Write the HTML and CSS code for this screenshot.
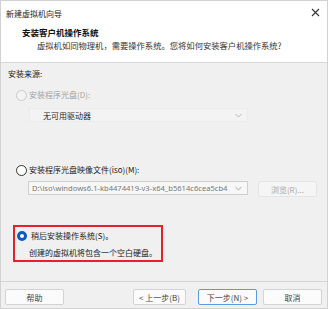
FILE: index.html
```html
<!DOCTYPE html>
<html lang="zh-CN">
<head>
<meta charset="utf-8">
<link rel="stylesheet" href="styles.css">
</head>
<body>
<div class="window">
  <div class="top">
    <div class="titlebar">
      <span class="title">新建虚拟机向导</span>
      <svg class="close" width="9" height="9" viewBox="0 0 9 9"><path d="M1 1L8 8M8 1L1 8" stroke="#333" stroke-width="1.1"/></svg>
    </div>
    <div class="header">
      <div class="h-title">安装客户机操作系统</div>
      <div class="h-sub">虚拟机如同物理机，需要操作系统。您将如何安装客户机操作系统?</div>
    </div>
  </div>
  <div class="body">
    <div class="section-label">安装来源:</div>
    <div class="radio-row disabled row-cd"><span class="radio"></span><span>安装程序光盘(D):</span></div>
    <div class="select disabled-select"><span>无可用驱动器</span><svg class="chev" width="7" height="5" viewBox="0 0 7 5"><path d="M0.5 1L3.5 4L6.5 1" fill="none" stroke="#b5b5b5" stroke-width="1"/></svg></div>
    <div class="radio-row row-iso"><span class="radio"></span><span>安装程序光盘映像文件(iso)(M):</span></div>
    <div class="iso-line">
      <div class="select iso-select"><span class="path">D:\iso\windows6.1-kb4474419-v3-x64_b5614c6cea5cb4</span><svg class="chev" width="7" height="5" viewBox="0 0 7 5"><path d="M0.5 1L3.5 4L6.5 1" fill="none" stroke="#a8a8a8" stroke-width="1"/></svg></div>
      <div class="btn browse">浏览(R)...</div>
    </div>
    <div class="later-box">
      <div class="radio-row row-later"><span class="radio checked"></span><span>稍后安装操作系统(S)。</span></div>
      <div class="later-desc">创建的虚拟机将包含一个空白硬盘。</div>
    </div>
  </div>
  <div class="footer">
    <div class="btn help">帮助</div>
    <div class="spacer"></div>
    <div class="btn prev">&lt; 上一步(B)</div>
    <div class="btn next">下一步(N) &gt;</div>
    <div class="btn cancel">取消</div>
  </div>
</div>
</body>
</html>
```
FILE: styles.css
```css
* { box-sizing: border-box; }
html, body { margin: 0; padding: 0; }
body {
  width: 328px;
  height: 309px;
  font-family: "Noto Sans CJK SC", "Noto Sans", sans-serif;
  font-size: 8px;
  color: #1b1b1b;
  background: #f0f0f0;
  overflow: hidden;
}
.window {
  width: 328px;
  height: 309px;
  display: flex;
  flex-direction: column;
  border: 1px solid #d2d2d2;
  background: #f0f0f0;
}
.top {
  background: #ffffff;
  border-bottom: 1px solid #d8d8d8;
  height: 62px;
  flex: none;
}
.titlebar {
  height: 25px;
  display: flex;
  align-items: center;
  justify-content: space-between;
  padding: 0 7px 0 5px;
}
.title { font-size: 8px; color: #222; }
.close { margin-top: -3px; }
.header { padding-left: 21px; }
.h-title {
  font-weight: bold;
  font-size: 8.5px;
  line-height: 12px;
  color: #111;
}
.h-sub {
  margin-top: 1px;
  padding-left: 15px;
  line-height: 12px;
  font-size: 8.3px;
  color: #333;
  white-space: nowrap;
}
.body {
  flex: 1;
  padding-top: 5px;
  padding-left: 7px;
}
.section-label { line-height: 12px; }
.radio-row {
  display: flex;
  align-items: center;
  line-height: 12px;
  height: 12px;
  padding-left: 8px;
  white-space: nowrap;
}
.radio {
  width: 11px;
  height: 11px;
  border-radius: 50%;
  border: 1px solid #333;
  background: #fff;
  margin-right: 2px;
  flex: none;
}
.disabled { color: #a3a3a3; }
.disabled .radio { border-color: #c9c9c9; background: #f4f4f4; }
.row-cd { margin-top: 9px; }
.select {
  display: flex;
  align-items: center;
  justify-content: space-between;
  height: 14px;
  padding: 0 5px 0 13px;
}
.disabled-select {
  margin-left: 21px;
  margin-top: 7px;
  width: 219px;
  background: #f3f3f3;
  border: 1px solid #ebebeb;
  color: #2a2a2a;
}
.row-iso { margin-top: 42px; }
.iso-line {
  display: flex;
  align-items: flex-start;
  height: 16px;
  margin-top: 5px;
  padding-left: 20px;
}
.iso-select {
  width: 220px;
  background: #f7f7f7;
  border: 1px solid #cfcfcf;
  padding-left: 3px;
  color: #777;
  font-family: "Noto Sans", "Noto Sans CJK SC", sans-serif;
  font-size: 7.6px;
}
.path {
  white-space: nowrap;
  overflow: hidden;
  text-overflow: clip;
  width: 204px;
}
.btn {
  height: 16px;
  display: flex;
  align-items: center;
  justify-content: center;
  border: 1px solid #d3d3d3;
  border-radius: 2px;
  background: #fbfbfb;
  color: #444;
  font-size: 8px;
  white-space: nowrap;
}
.browse {
  margin-left: 10px;
  width: 59px;
  background: #f5f5f5;
  border-color: #e4e4e4;
  color: #a9a9a9;
}
.later-box {
  margin-top: 28px;
  margin-left: 5px;
  width: 150px;
  height: 37px;
  border: 2px solid #e4222a;
}
.row-later { padding-left: 2px; margin-top: 3px; }
.radio.checked {
  width: 10px;
  height: 10px;
  border: 3px solid #0b5cc0;
  background: #fff;
  margin-right: 4px;
}
.later-desc {
  margin-top: 5px;
  padding-left: 14px;
  line-height: 12px;
  white-space: nowrap;
}
.footer {
  height: 27px;
  flex: none;
  border-top: 1px solid #d6d6d6;
  display: flex;
  align-items: flex-start;
  padding: 7px 5px 0 4px;
}
.spacer { flex: 1; }
.help { width: 59px; }
.prev { width: 53px; }
.next { width: 59px; margin-left: 12px; border-color: #5c9ae0; }
.cancel { width: 59px; margin-left: 6px; }
```
